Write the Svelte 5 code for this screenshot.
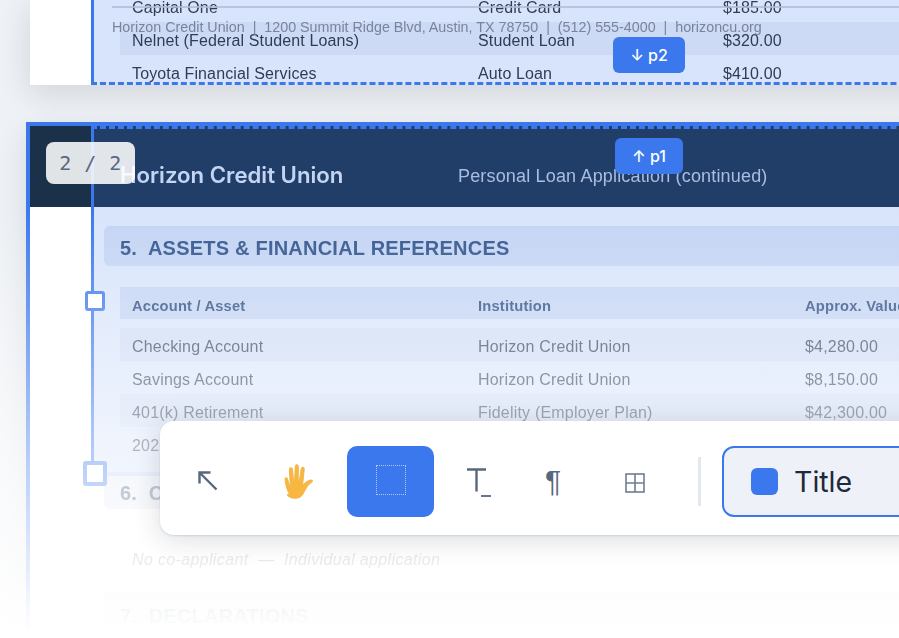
<script>
  const prevRows = [
    { name: 'Capital One', kind: 'Credit Card', pay: '$185.00' },
    { name: 'Nelnet (Federal Student Loans)', kind: 'Student Loan', pay: '$320.00', alt: true },
    { name: 'Toyota Financial Services', kind: 'Auto Loan', pay: '$410.00' },
  ]
  const assets = [
    { name: 'Checking Account', inst: 'Horizon Credit Union', value: '$4,280.00', alt: true },
    { name: 'Savings Account', inst: 'Horizon Credit Union', value: '$8,150.00' },
    { name: '401(k) Retirement', inst: 'Fidelity (Employer Plan)', value: '$42,300.00', alt: true },
    { name: '2021 Honda Civic', inst: 'Toyota Financial Services', value: '$18,500.00' },
  ]
</script>

<div class="view">
  <div class="canvas">
    <section class="page prev">
      <div class="prev-rows">
        {#each prevRows as r}
          <div class="prow" class:alt={r.alt}>
            <span>{r.name}</span><span>{r.kind}</span><span>{r.pay}</span>
          </div>
        {/each}
      </div>
      <div class="rule"></div>
      <div class="footer">Horizon Credit Union &nbsp;|&nbsp; 1200 Summit Ridge Blvd, Austin, TX 78750 &nbsp;|&nbsp; (512) 555-4000 &nbsp;|&nbsp; horizoncu.org</div>
      <div class="sel sel-prev"></div>
    </section>

    <section class="page cur">
      <header class="dochead">
        <span class="org">Horizon Credit Union</span>
        <span class="sub">Personal Loan Application (continued)</span>
      </header>
      <div class="sect first">5.&nbsp; ASSETS &amp; FINANCIAL REFERENCES</div>
      <div class="thead">
        <span>Account / Asset</span><span>Institution</span><span>Approx. Value</span>
      </div>
      <div class="tbody">
        {#each assets as a}
          <div class="trow" class:alt={a.alt}>
            <span>{a.name}</span><span>{a.inst}</span><span>{a.value}</span>
          </div>
        {/each}
      </div>
      <div class="sect six">6.&nbsp; CO-APPLICANT INFORMATION</div>
      <p class="note">No co-applicant &nbsp;—&nbsp; Individual application</p>
      <div class="sect seven">7.&nbsp; DECLARATIONS</div>

      <div class="sel sel-cur">
        <span class="handle h1"></span>
        <span class="handle h2"></span>
      </div>
    </section>
  </div>

  <div class="fade"></div>

  <span class="chip chip-p2">↓ p2</span>
  <span class="chip chip-p1">↑ p1</span>
  <div class="counter">2 / 2</div>

  <div class="toolbar">
    <button class="tool w-arrow" aria-label="Select">
      <svg width="24" height="24" viewBox="0 0 24 24" fill="none" stroke="#566880" stroke-width="2.4">
        <path d="M3.500 14.500V3.500H14.500M3.500 3.500L20.500 20.500" />
      </svg>
    </button>
    <button class="tool w-hand" aria-label="Pan">
      <svg width="46" height="46" viewBox="0 0 36 36">
        <path d="M10.500 28c-2-3-2.600-6-3.200-9.500-.3-1.800-.5-2.800.4-3 .9-.2 1.400.8 1.800 2.500l.8 3.300c.3.600.9.400.9-.2L10.500 10c-.1-1.500.2-2.300 1.100-2.300s1.300.8 1.400 2.300l.7 8c.1.700.9.700.9 0l.4-10.500c.1-1.500.5-2.300 1.300-2.300s1.200.8 1.200 2.300l-.1 10.600c0 .7.800.7.900 0l1.300-8.800c.2-1.400.7-2.100 1.500-2 .8.100 1.100 1 .9 2.400l-1.100 10.500c0 .6.500.8.900.4 1.500-1.600 3.400-3 5.200-3.300 1.100-.2 1.800.4 1.400 1.100-.3.500-1.600 1.100-2.800 2.300-2 2-3 4.600-4.300 7-1.400 2.500-3.500 3.800-6.500 3.800-2.400 0-4.700-.8-6-2.500z" fill="#f8b73e" stroke="#f3b54a" stroke-width=".8"/>
      </svg>
    </button>
    <button class="tool w-area active" aria-label="Area"><span class="dots"></span></button>
    <button class="tool w-text" aria-label="Text">
      <svg width="28" height="32" viewBox="0 0 28 32" fill="none" stroke="#566880">
        <path d="M3 4.500H22M12.500 4.500V26.500" stroke-width="2.400" />
        <path d="M17 31H27" stroke-width="1.800" />
      </svg>
    </button>
    <button class="tool w-para" aria-label="Paragraph"><span class="pil">¶</span></button>
    <button class="tool w-grid" aria-label="Table">
      <svg class="gridicon" width="20" height="20" viewBox="0 0 20 20" fill="none" stroke="#6f7e92" stroke-width="1.600">
        <rect x="1" y="1" width="18" height="18" /><path d="M10 1V19M1 10H19" />
      </svg>
    </button>
    <span class="divider"></span>
    <div class="stylechip"><span class="swatch"></span><span class="stylename">Title</span></div>
  </div>
</div>

<style>
  :global(body) { background:#eef1f5; }
  .view { position:relative;width:899px;height:638px;overflow:hidden;font-family:"Liberation Sans",Arial,sans-serif; }
  .canvas { display:flex;flex-direction:column;gap:41px;padding-left:30px;width:1100px;filter:blur(.3px); }

  .page { position:relative;background:#fff;box-shadow:0 8px 32px rgba(30,40,60,.14); }
  .prev { height:85px;overflow:hidden; }
  .cur { height:640px;outline:4px solid #3b78ed; }

  .prev-rows { position:absolute;left:90px;right:0;top:-11px; }
  .prow { display:grid;grid-template-columns:346px 245px 1fr;height:33px;box-sizing:border-box;align-items:center;padding:5px 0 0 12px;font-size:16px;letter-spacing:.13px;color:#2e2e2e; }
  .prow.alt { background:#f0f3f8; }
  .rule { position:absolute;left:82px;right:0;top:6px;height:2px;background:#c9ced8;opacity:.8; }
  .footer { position:absolute;left:82px;top:19px;font-size:14.3px;line-height:16px;color:#888;white-space:nowrap; }

  .sel { position:absolute;left:61px;right:0;background:rgba(59,120,237,.2);border-left:3px solid #3b78ed; }
  .sel-prev { top:0;bottom:0;border-bottom:3px dashed #3b78ed; }
  .sel-cur { top:0;height:347px;border-top:3px dashed #3b78ed; }

  .chip { position:absolute;display:flex;align-items:center;justify-content:center;background:#3b78ed;color:#fff;font-family:Inter,sans-serif;font-size:16px;font-weight:500;border-radius:6px;height:36px; }
  .chip-p2 { left:613px;top:37px;width:72px; }
  .chip-p1 { left:615px;top:138px;width:68px; }

  .handle { position:absolute;background:#fff;border-style:solid;border-color:#3b78ed;border-radius:3px;box-sizing:border-box; }
  .h1 { left:-9px;top:162px;width:20px;height:20px;border-width:3px; }
  .h2 { left:-11px;top:332px;width:24px;height:25px;border-width:4px; }

  .counter { position:absolute;left:46px;top:142px;width:89px;height:42px;display:flex;align-items:center;justify-content:center;background:rgba(255,255,255,.87);border-radius:8px;color:#5a6880;font-family:"DejaVu Sans Mono",monospace;font-size:20px;letter-spacing:.5px;white-space:pre; }

  .dochead { height:81px;background:#1b3049;display:flex;align-items:center;padding-left:90px; }
  .org { width:338px;font-family:Inter,sans-serif;font-size:22.2px;font-weight:600;color:#e6ecf5;margin-top:16px;white-space:nowrap; }
  .sub { font-size:18px;letter-spacing:.17px;color:#c3cfdf;margin-top:20px;white-space:nowrap; }

  .sect { margin-left:74px;padding:5px 0 0 16px;height:40px;box-sizing:border-box;display:flex;align-items:center;background:#e4eaf5;border-radius:6px;font-size:20px;letter-spacing:.22px;font-weight:700;color:#2c4a75;white-space:nowrap; }
  .first { margin-top:19px; }
  .thead { margin:21px 0 0 90px;height:32px;box-sizing:border-box;display:grid;grid-template-columns:346px 327px 1fr;align-items:center;padding:5px 0 0 12px;background:#e4eaf5;font-size:14.7px;letter-spacing:.2px;font-weight:700;color:#233f68;white-space:nowrap; }
  .tbody { margin:9px 0 0 90px; }
  .trow { height:33px;box-sizing:border-box;display:grid;grid-template-columns:346px 327px 1fr;align-items:center;padding:4px 0 0 12px;font-size:16px;letter-spacing:.2px;color:#333;white-space:nowrap; }
  .trow.alt { background:#f2f4f8; }
  .six { margin-top:12px;height:37px; }
  .note { margin:42px 0 0 102px;font-size:16px;letter-spacing:.35px;font-style:italic;color:#777; }
  .seven { margin-top:23px;height:44px; }

  .fade { position:absolute;inset:0;background:linear-gradient(to bottom,rgba(255,255,255,0) 205px,rgba(255,255,255,.62) 450px,#fff 632px); }

  .toolbar { position:absolute;left:160px;top:421px;width:800px;height:114px;background:#fff;border-radius:14px;box-shadow:0 4px 28px rgba(20,30,50,.16),0 1px 2px rgba(20,30,50,.12);display:flex;align-items:center;padding:6px 0 0 4px;box-sizing:border-box; }
  .tool { flex:none;height:71px;border:0;background:none;padding:0;display:flex;align-items:center;justify-content:center;border-radius:10px; }
  .w-arrow { width:88px; }
  .w-hand { width:93px;margin-right:2px; }
  .w-area { width:87px; }
  .w-text { width:88px; }
  .w-para { width:62px; }
  .w-grid { width:102px; }
  .gridicon { margin-top:3px; }
  .active { background:#3b78ed; }
  .dots { width:30px;height:30px;box-sizing:border-box;border:1.5px dotted rgba(255,255,255,.6);margin-top:-2px; }
  .pil { font-family:"Liberation Sans",sans-serif;font-size:30px;color:#566880;line-height:1; }
  .divider { flex:none;width:3px;height:49px;background:#e2e8f0;margin:0 21px 0 12px; }
  .stylechip { flex:none;width:300px;height:71px;box-sizing:border-box;border:2px solid #3b78ed;border-radius:12px;background:#eef1f8;display:flex;align-items:center;padding-left:27px;gap:16px; }
  .swatch { width:27px;height:27px;border-radius:6px;background:#3b78ed; }
  .stylename { font-family:Inter,sans-serif;font-size:28.500px;color:#1e293b; }
</style>
